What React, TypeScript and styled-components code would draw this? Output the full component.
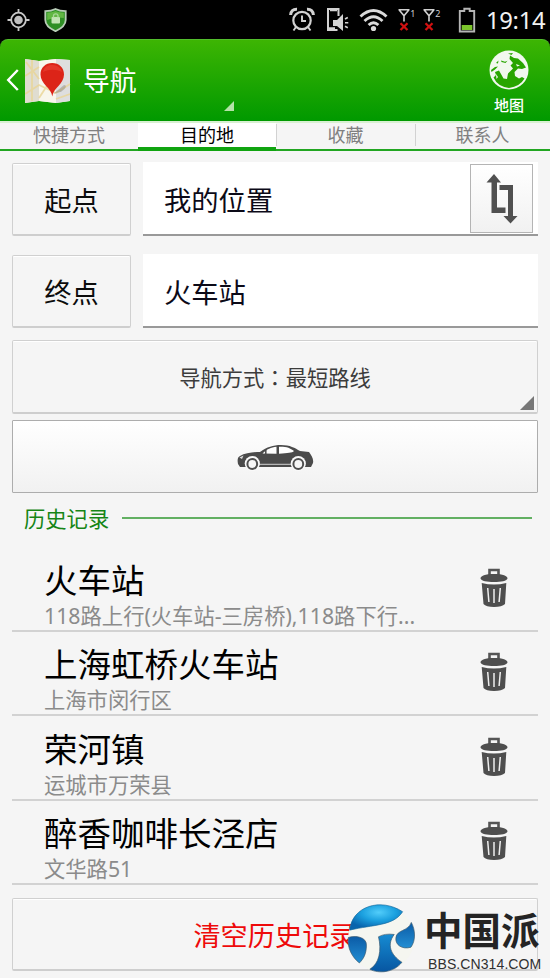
import React from "react";
import styled, { createGlobalStyle } from "styled-components";

const GlobalStyle = createGlobalStyle`
  *, *::before, *::after { box-sizing: border-box; }
  body { margin: 0; background: #f5f5f5; }
  button { font: inherit; color: inherit; padding: 0; border-radius: 0; }
  svg { display: block; flex: none; }
`;

const Screen = styled.div`
  position: relative;
  width: 550px;
  height: 978px;
  overflow: hidden;
  display: flex;
  flex-direction: column;
  background: #f5f5f5;
  font-family: "Noto Sans", "Noto Sans CJK SC", sans-serif;
  color: #000;
`;

const TopArea = styled.div`
  background: #000;
`;

const StatusBar = styled.div`
  height: 39px;
  display: flex;
  align-items: center;
  justify-content: space-between;
  padding: 0 2px 0 7px;
`;

const StatusGroup = styled.div`
  display: flex;
  align-items: center;
`;

const LeftStatus = styled(StatusGroup)`
  gap: 14px;
`;

const RightStatus = styled(StatusGroup)`
  gap: 10px;
`;

const SignalGroup = styled(StatusGroup)`
  gap: 7px;
  margin-right: 7px;
`;

const Clock = styled.span`
  width: 62px;
  font-size: 23.8px;
  line-height: 38px;
  letter-spacing: -0.3px;
  color: #f2f2f2;
  white-space: nowrap;
`;

const Header = styled.header`
  height: 82px;
  display: flex;
  align-items: center;
  padding: 0 20px 0 6px;
  border-radius: 8px 8px 0 0;
  background: linear-gradient(#3db503, #009900);
  border-top: 1px solid #52bd2c;
  color: #fff;
`;

const HeaderHome = styled.div`
  display: flex;
  align-items: center;
  gap: 6px;
`;

const HeaderTitle = styled.h1`
  flex: 1;
  margin: 0 0 0 12px;
  font-size: 26.8px;
  line-height: 40px;
  font-weight: 400;
`;

const HeaderCorner = styled.div`
  align-self: flex-end;
  margin: 0 254px 10px 0;
`;

const MapAction = styled.div`
  display: flex;
  flex-direction: column;
  align-items: center;
  font-size: 15px;
  font-weight: 500;
  line-height: 20px;
  gap: 5px;
  width: 42px;
  margin-top: 3px;
`;

const Tabs = styled.nav`
  height: 30px;
  display: grid;
  grid-template-columns: 138px 138px 139px 135px;
  grid-template-rows: 28px;
  border-top: 2px solid #d8f0d2;
`;

const Tab = styled.div<{ $active?: boolean }>`
  display: flex;
  justify-content: center;
  font-size: 18px;
  line-height: 25px;
  color: ${(p) => (p.$active ? "#000" : "#808080")};
  background: ${(p) => (p.$active ? "#fff" : "linear-gradient(90deg, #d2d2d2 1px, transparent 1px) 0 1px / 100% 22px no-repeat #f5f5f5")};
  border-bottom: ${(p) => (p.$active ? "4px solid #10a410" : "2px solid #22a622")};
  &:first-child { background: #f5f5f5; }
`;

const Form = styled.section`
  padding: 11px 12px 0;
  display: flex;
  flex-direction: column;
`;

const Field = styled.div`
  height: 74px;
  display: grid;
  grid-template-columns: 119px 395px;
  column-gap: 12px;
  margin-bottom: 18px;
  & + & { margin-bottom: 12px; }
`;

const FlatButton = styled.button<{ $danger?: boolean }>`
  width: 100%;
  height: 73px;
  display: flex;
  align-items: center;
  justify-content: center;
  align-self: end;
  background: #f5f5f5;
  border: 1px solid #d0d0d0;
  border-bottom: 2px solid #cecece;
  border-radius: 2px;
  box-shadow: inset 0 1px #fff;
  font-size: 27.2px;
  color: ${(p) => (p.$danger ? "#ee0a0a" : "#0c0c0c")};
`;

const Input = styled.div`
  display: flex;
  align-items: center;
  justify-content: space-between;
  padding: 1px 5px 0 21px;
  background: #fff;
  border-bottom: 2px solid #999;
  font-size: 27.3px;
  color: #0c0a18;
`;

const SwapButton = styled.button`
  width: 63px;
  height: 69px;
  display: flex;
  align-items: center;
  justify-content: center;
  background: linear-gradient(#fff, #f1f1f1);
  border: 1px solid #b4b4b4;
`;

const ModePicker = styled(FlatButton)`
  position: relative;
  height: 74px;
  padding-bottom: 1px;
  font-size: 21.3px;
  color: #3c3c3c;
`;

const CenteredColon = styled.span`
  font-family: "Noto Sans CJK TC", sans-serif;
`;

const PickerCorner = styled.span`
  position: absolute;
  right: 3px;
  bottom: 2px;
`;

const CarButton = styled.button`
  height: 73px;
  margin-top: 6px;
  padding-top: 2px;
  display: flex;
  align-items: center;
  justify-content: center;
  background: linear-gradient(#fff, #f1f1f1);
  border: 1px solid #adadad;
  border-radius: 1px;
`;

const SectionTitle = styled.h2`
  height: 54px;
  margin: 0;
  padding: 0 18px 6px 24px;
  display: flex;
  align-items: center;
  gap: 13px;
  font-size: 21.3px;
  font-weight: 400;
  color: #168516;
  &::after {
    content: "";
    flex: 1;
    height: 2px;
    margin-top: 1px;
    background: #62b062;
  }
`;

const HistoryList = styled.ul`
  list-style: none;
  margin: 0 12px;
  padding: 0;
`;

const HistoryItem = styled.li`
  height: 84.5px;
  display: flex;
  align-items: flex-end;
  justify-content: space-between;
  padding: 0 30px 0 32px;
  border-bottom: 2px solid #d2d2d2;
`;

const Place = styled.div`
  display: flex;
  flex-direction: column;
  margin-bottom: 1px;
`;

const PlaceName = styled.div`
  font-size: 33.5px;
  line-height: 44px;
  white-space: nowrap;
`;

const PlaceDetail = styled.div`
  font-size: 21.3px;
  line-height: 27px;
  color: #8b8b8b;
  white-space: nowrap;
`;

const TrashSlot = styled.div`
  height: 62px;
`;

const Footer = styled.footer`
  padding: 13px 12px 0;
`;

const Watermark = styled.div`
  position: absolute;
  left: 345px;
  top: 902px;
  display: flex;
`;

const WatermarkText = styled.div`
  display: flex;
  flex-direction: column;
  width: 125px;
  margin: -2px 0 0 7px;
`;

const WatermarkName = styled.span`
  font-family: "Noto Sans CJK SC", sans-serif;
  font-weight: 700;
  font-size: 38.5px;
  line-height: 57px;
  color: #242424;
  white-space: nowrap;
`;

const WatermarkUrl = styled.span`
  font-family: "Liberation Sans", sans-serif;
  font-size: 14px;
  line-height: 16px;
  letter-spacing: 0.1px;
  margin-left: 4px;
  margin-top: -1px;
  color: #303030;
  white-space: nowrap;
`;

const LocateIcon = () => (
  <svg width="23" height="24" viewBox="0 0 23 24" fill="none" stroke="#c8c8c8">
    <circle cx="11.5" cy="12" r="7.3" strokeWidth="1.8" />
    <circle cx="11.5" cy="12" r="4.3" fill="#c0c0c0" stroke="none" />
    <path d="M11.5 1v4M11.5 19v4M0.5 12h4M18.5 12h4" strokeWidth="1.8" />
  </svg>
);

const ShieldIcon = () => (
  <svg width="23" height="24" viewBox="0 0 23 24">
    <path d="M11.5 1C8.5 2.6 5 3.2 1.3 3.2V12c0 5 4.5 8.6 10.2 11.2C17.2 20.6 21.7 17 21.7 12V3.2C18 3.2 14.5 2.6 11.5 1Z" fill="#2f8f25" stroke="#b9cdb8" strokeWidth="1.8" />
    <path d="M11.5 3C9 4.200 6 4.600 3.200 4.800V12c4-1 6-3 16.600-2V4.800C17 4.600 14 4.200 11.5 3Z" fill="#62b743" />
    <rect x="7.500" y="9" width="8.500" height="6.500" rx="1" fill="#c3e4b4" />
    <path d="M9.500 9.500V7.800c0-2.600 4.500-2.600 4.500 0v1.700" fill="none" stroke="#a9d798" strokeWidth="1.300" />
  </svg>
);

const AlarmIcon = () => (
  <svg width="26" height="25" viewBox="0 0 26 25" fill="none" stroke="#d2d2d2" strokeWidth="2.2">
    <circle cx="13" cy="13.5" r="8.7" />
    <path d="M13 8.5v5.5h4M7 20l-2.5 3.500M19 20l2.500 3.500" strokeWidth="1.900" />
    <path d="M1.600 8C1.800 4 4 2 8 2.200M24.400 8C24.200 4 22 2 18 2.200" strokeWidth="3" />
  </svg>
);

const PhoneSoundIcon = () => (
  <svg width="24" height="25" viewBox="0 0 24 25" fill="none" stroke="#d2d2d2">
    <path d="M13.500 9V2H3v21h9.500" strokeWidth="2" />
    <path d="M3 21.500h7M5 3h7" strokeWidth="2.600" />
    <path d="M8 13h4l6-6v17L12 19H8Z" fill="#d2d2d2" stroke="none" />
    <path d="M20 12l2.800-1.500M20 15.700h3.300M20 19.300l2.800 1.500" strokeWidth="1.600" />
  </svg>
);

const WifiIcon = () => (
  <svg width="29" height="24" viewBox="0 0 29 24" fill="none" stroke="#dadada" strokeWidth="2.9">
    <path d="M1.500 8.500Q14.500-3.500 27.500 8.500M5.500 13Q14.500 4.500 23.500 13M9.600 17Q14.500 12.500 19.400 17" />
    <circle cx="14.500" cy="20.500" r="2.600" fill="#dadada" stroke="none" />
  </svg>
);

const SignalIcon = ({ slot }: { slot: string }) => (
  <svg width="18" height="24" viewBox="0 0 18 24" fill="none">
    <path d="M0.500 1.800h11M1.200 2l4.800 5.800L10.800 2M6 7v6.500" stroke="#d0d0d0" strokeWidth="1.600" />
    <path d="M2.500 15.200l7 6.800M9.500 15.200l-7 6.800" stroke="#d01010" strokeWidth="2.300" />
    <text x="12.200" y="8.800" fill="#cfcfcf" fontSize="9" fontFamily="Noto Sans">{slot}</text>
  </svg>
);

const BatteryIcon = () => (
  <svg width="18" height="26" viewBox="0 0 18 26">
    <path d="M1.800 4h4.500V1.800h5.400V4h4.500v20.500H1.800Z" fill="none" stroke="#b5b5b5" strokeWidth="1.900" />
    <rect x="3.700" y="18" width="10.600" height="5" fill="#7cc52c" />
  </svg>
);

const BackIcon = () => (
  <svg width="13" height="24" viewBox="0 0 13 24" fill="none" stroke="#fff" strokeWidth="2.4">
    <path d="M11.800 1L2.200 11L11.800 21" />
  </svg>
);

const MapPinIcon = () => (
  <svg width="46" height="46" viewBox="0 0 46 46">
    <path d="M0 1l14 2 17-2 14 1v41l-14 2-17-2-14 2Z" fill="#eeece0" />
    <path d="M14 3l17-2v44l-17-2Z" fill="#f8f6ec" />
    <path d="M0 1l14 2v40L0 45Z" fill="#e0ddd0" />
    <path d="M31 1l14 1v41l-14 2Z" fill="#dedede" />
    <path d="M0 18L14 9M0 36l14-9 17 8 14-9M7 2v41M14 40l17-26M1 4l13 17M31 41l14-5" stroke="#e8d595" strokeWidth="1.800" fill="none" opacity=".8" />
    <path d="M28 36L39 27c4 0 1 5-4 7Z" fill="#777" opacity=".4" />
    <path d="M27.300 38.500C26.500 30 15.500 26 15.500 16.500C15.500 9.500 20.500 5 27.200 5S39 9.500 39 16.500C39 26 28.200 30 27.300 38.500Z" fill="#dc2418" />
    <path d="M18 14C19 9 23 6.500 28 7c5 .5 8 3 9 7-6-3-13-3-19 0Z" fill="#f05040" opacity=".45" />
  </svg>
);

const GlobeIcon = () => (
  <svg width="40" height="40" viewBox="0 0 40 40">
    <circle cx="20" cy="20" r="19.500" fill="#f1f8ee" />
    <path d="M21 5.500L25 8L29 8.500L34 13L37 17.500L33 19L29 18.500L25.500 22L26 26L30 28.500L33 27L35.500 28.500Q31 36.500 20 38Q8.500 36.500 4.500 27.500L7 25L6 22L10 20.500L12 24L14.500 28.500L18 29L19 23.500L24 18.500L21.500 15.500L24 13L20.500 9Z" fill="#28a500" />
    <path d="M19 3.500l5-.500-1.500 2ZM12 10.500l4 1.200 2.500-1-2 2.300-4-1ZM2 20l4-3 3-.500-3 3-3.500 2.500ZM7 13l2.500-2.500-.500 3Z" fill="#28a500" />
    <path d="M7 24l2 3-1.500 2ZM27 14l4 1.500-3 1Z" fill="#f1f8ee" />
  </svg>
);

const CornerIcon = ({ size, color }: { size: number; color: string }) => (
  <svg width={size} height={size} viewBox="0 0 10 10">
    <path d="M10 0v10H0Z" fill={color} />
  </svg>
);

const SwapIcon = () => (
  <svg width="32" height="50" viewBox="0 0 32 50" fill="#505050">
    <path d="M8 0l7 8.500H11v25h8.500V39H5.500V8.500H.500Z" />
    <path d="M13.500 11h13.500v31h4.500L24.500 49.500L17.500 42H22V16h-8.500Z" />
  </svg>
);

const CarIcon = () => (
  <svg width="77" height="28" viewBox="0 0 77 28">
    <path d="M1 20C0 15 1 13 3 12C8 9 16 8 23 8C30 3 36 1 44 1C53 1 58 4 63 7L72 8C74 11 77 15 76 19L74 23H3Z" fill="#4b4b4b" />
    <path d="M25.500 9.500C30 5 34 3.200 39.500 2.700v7ZM42 2.700C50 2.500 53 4 57 7C55 9 51 9 42 9.700Z" fill="#fff" />
    <path d="M28.800 6v4" stroke="#4b4b4b" strokeWidth="1.500" />
    <path d="M2.500 13.500l4-2-1.500 3.500Z" fill="#ddd" />
    <path d="M22 20.300h33" stroke="#d0d0d0" />
    <circle cx="15.300" cy="19.500" r="7.600" fill="#fafafa" />
    <circle cx="61.300" cy="19.500" r="7.600" fill="#fafafa" />
    <circle cx="15.300" cy="20" r="4.900" fill="#f7f7f7" stroke="#505050" strokeWidth="2" />
    <circle cx="61.300" cy="20" r="4.900" fill="#f7f7f7" stroke="#505050" strokeWidth="2" />
  </svg>
);

const TrashIcon = () => (
  <svg width="28" height="40" viewBox="0 0 28 40">
    <path d="M9.500 7V2h9v5" fill="none" stroke="#555" strokeWidth="2.600" />
    <path d="M.500 10.500C.500 8 5 6 14 6s13.500 2 13.500 4.500C27 13 21 14 14 14S1 13 .500 10.500Z" fill="#4e4e4e" />
    <path d="M1.700 15Q14 18 26.300 15L25 36Q22 39 14 39T3.500 36Z" fill="#4e4e4e" />
    <path d="M7.700 20l1.200 14M14 21v14M20.300 20l-1.200 14" stroke="#eee" strokeWidth="1.500" />
  </svg>
);

const SphereLogo = () => (
  <svg width="72" height="72" viewBox="45 65 215 215">
    <defs>
      <radialGradient id="sky" cx=".55" cy=".3" r=".65">
        <stop offset="0" stopColor="#52cdfa" />
        <stop offset=".5" stopColor="#1ba0df" />
        <stop offset="1" stopColor="#0964ad" />
      </radialGradient>
      <linearGradient id="deep" x1="0" y1="0" x2="0" y2="1">
        <stop offset="0" stopColor="#0b5ba6" />
        <stop offset="1" stopColor="#238ed3" />
      </linearGradient>
      <linearGradient id="stem" x1="0" y1="0" x2="0" y2="1">
        <stop offset="0" stopColor="#168bd2" />
        <stop offset="1" stopColor="#0756a1" />
      </linearGradient>
    </defs>
    <circle cx="153" cy="174" r="99" fill="#f5f6f0" />
    <path d="M59 149C66 78 151 51 217 94C190 137 130 132 59 149Z" fill="url(#sky)" stroke="#176b9e" strokeWidth="2" />
    <path d="M55 171C75 164 110 169 109 194C109 220 100 235 88 247C67 231 51 203 55 171Z" fill="url(#deep)" stroke="#38576c" strokeWidth="2" />
    <path d="M145 169Q164 158 192 162C169 192 181 223 215 245C190 277 145 279 119 266C147 250 155 209 145 169Z" fill="url(#stem)" stroke="#38576c" strokeWidth="2" />
    <path d="M243 126C255 148 257 179 242 200C216 208 194 193 197 172C199 147 234 153 243 126Z" fill="url(#deep)" stroke="#38576c" strokeWidth="2" />
  </svg>
);

const history = [
  { name: "火车站", detail: "118路上行(火车站-三房桥),118路下行..." },
  { name: "上海虹桥火车站", detail: "上海市闵行区" },
  { name: "荣河镇", detail: "运城市万荣县" },
  { name: "醉香咖啡长泾店", detail: "文华路51" },
];

export default function App() {
  return (
    <Screen>
      <GlobalStyle />
      <TopArea>
        <StatusBar>
          <LeftStatus>
            <LocateIcon />
            <ShieldIcon />
          </LeftStatus>
          <RightStatus>
            <AlarmIcon />
            <PhoneSoundIcon />
            <WifiIcon />
            <SignalGroup>
              <SignalIcon slot="1" />
              <SignalIcon slot="2" />
            </SignalGroup>
            <BatteryIcon />
            <Clock>19:14</Clock>
          </RightStatus>
        </StatusBar>
        <Header>
          <HeaderHome>
            <BackIcon />
            <MapPinIcon />
          </HeaderHome>
          <HeaderTitle>导航</HeaderTitle>
          <HeaderCorner>
            <CornerIcon size={10} color="#b4e2a8" />
          </HeaderCorner>
          <MapAction>
            <GlobeIcon />
            地图
          </MapAction>
        </Header>
      </TopArea>
      <Tabs>
        <Tab>快捷方式</Tab>
        <Tab $active>目的地</Tab>
        <Tab>收藏</Tab>
        <Tab>联系人</Tab>
      </Tabs>
      <Form>
        <Field>
          <FlatButton>起点</FlatButton>
          <Input>
            我的位置
            <SwapButton>
              <SwapIcon />
            </SwapButton>
          </Input>
        </Field>
        <Field>
          <FlatButton>终点</FlatButton>
          <Input>火车站</Input>
        </Field>
        <ModePicker>
          导航方式<CenteredColon>：</CenteredColon>最短路线
          <PickerCorner>
            <CornerIcon size={14} color="#777" />
          </PickerCorner>
        </ModePicker>
        <CarButton>
          <CarIcon />
        </CarButton>
      </Form>
      <SectionTitle>历史记录</SectionTitle>
      <HistoryList>
        {history.map((h) => (
          <HistoryItem key={h.name}>
            <Place>
              <PlaceName>{h.name}</PlaceName>
              <PlaceDetail>{h.detail}</PlaceDetail>
            </Place>
            <TrashSlot>
              <TrashIcon />
            </TrashSlot>
          </HistoryItem>
        ))}
      </HistoryList>
      <Footer>
        <FlatButton $danger>清空历史记录</FlatButton>
      </Footer>
      <Watermark>
        <SphereLogo />
        <WatermarkText>
          <WatermarkName>中国派</WatermarkName>
          <WatermarkUrl>BBS.CN314.COM</WatermarkUrl>
        </WatermarkText>
      </Watermark>
    </Screen>
  );
}
